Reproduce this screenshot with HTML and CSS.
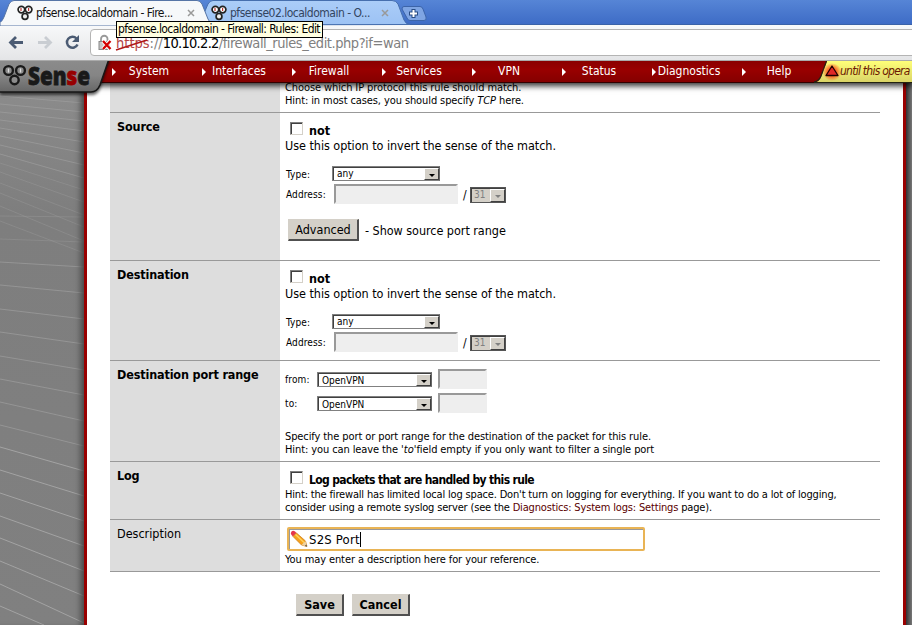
FILE: index.html
```html
<!DOCTYPE html>
<html lang="en">
<head>
<meta charset="utf-8">
<title>pfsense.localdomain - Firewall: Rules: Edit</title>
<link rel="stylesheet" href="styles.css">
</head>
<body>
<svg class="defs" width="0" height="0">
  <defs>
    <symbol id="pf" viewBox="0 0 16 16">
      <circle cx="4.4" cy="4.6" r="3.3" fill="#fff" stroke="#222" stroke-width="1.7"/>
      <circle cx="11.6" cy="4.6" r="3.3" fill="#fff" stroke="#222" stroke-width="1.7"/>
      <circle cx="8" cy="11.4" r="2.9" fill="#eee" stroke="#222" stroke-width="1.7"/>
      <path d="M4 3v3M11.6 3v3" stroke="#b33" stroke-width="1.2"/>
    </symbol>
  </defs>
</svg>
<div class="browser">
  <div class="tabstrip">
    <svg class="tabshapes" width="440" height="26" viewBox="0 0 440 26">
      <defs><linearGradient id="t2" x2="0" y2="1"><stop offset="0" stop-color="#abcdf8"/><stop offset="1" stop-color="#9cc2f4"/></linearGradient></defs>
      <path d="M199 25L208 4Q210 .5 213 .5H392Q396 .5 398 4L404 20Q406 24.500 410 24.500Z" fill="url(#t2)" stroke="#466fae"/>
      <path d="M0 26V22Q2 22 4 17L9 4Q11 .5 14 .5H197Q200 .5 202 4L208 19Q210 24.500 214 24.500L214 26Z" fill="#f6f8fa" stroke="#5675a6"/>
      <path d="M404 6.500H420Q422 6.500 423 9L426 17Q427 20.500 424 20.500H410Q408 20.500 407 18L402 9Q402 6.500 404 6.500Z" fill="#7fa5e3" stroke="#3c64a9"/>
      <path d="M413.500 9v9M409 13.500h9" stroke="#294d85" stroke-width="4"/>
      <path d="M413.500 10v7M410 13.500h7" stroke="#fff" stroke-width="2"/>
    </svg>
    <div class="tab tab1"><svg class="fav"><use href="#pf"/></svg><span class="tt">pfsense.localdomain - Fire...</span><svg class="x" viewBox="0 0 8 8"><path d="M1 1l6 6M7 1l-6 6"/></svg></div>
    <div class="tab tab2"><svg class="fav"><use href="#pf"/></svg><span class="tt">pfsense02.localdomain - O...</span><svg class="x" viewBox="0 0 8 8"><path d="M1 1l6 6M7 1l-6 6"/></svg></div>
  </div>
  <div class="toolbar">
    <svg class="navicons" width="90" height="34" viewBox="0 0 90 34">
      <path d="M23 17.500H11M16 12l-5.500 5.500L16 23" fill="none" stroke="#4b5b73" stroke-width="2.800"/>
      <path d="M38 17.500H50M45 12l5.500 5.500L45 23" fill="none" stroke="#c9cdd2" stroke-width="2.800"/>
      <path d="M76.500 13.500A5.500 5.500 0 1 0 77.500 19.500" fill="none" stroke="#4b5b73" stroke-width="2.500"/>
      <path d="M79 10v7h-7z" fill="#4b5b73"/>
    </svg>
    <div class="omni">
      <svg class="lock" width="16" height="18" viewBox="0 0 16 18">
        <path d="M4 8V5a3 3 0 0 1 6.500 0V8" fill="none" stroke="#999" stroke-width="1.800"/>
        <rect x="2" y="7.500" width="10" height="8" fill="#c5c5c5" stroke="#888"/>
        <path d="M6 7l7 8M13 7l-7 8" stroke="#fff" stroke-width="4"/>
        <path d="M6 7l7.500 8M13.500 7l-7.500 8" stroke="#d30000" stroke-width="2.300"/>
      </svg>
      <span class="url"><span class="https">https<svg class="strike" width="34" height="14" viewBox="0 0 34 14"><path d="M1 12L32 2" stroke="#b01818" stroke-width="1.600"/></svg></span>://<b>10.10.2.2</b><span class="path">/firewall_rules_edit.php?if=wan</span></span>
    </div>
  </div>
  <div class="tip">pfsense.localdomain - Firewall: Rules: Edit</div>
</div>
<div class="menu">
  <span class="m">System</span><span class="m">Interfaces</span><span class="m">Firewall</span><span class="m">Services</span><span class="m">VPN</span><span class="m">Status</span><span class="m">Diagnostics</span><span class="m">Help</span>
  <div class="alert">
    <svg class="alertbg" width="98" height="22" viewBox="0 0 98 22">
      <defs><linearGradient id="yl" x2="0" y2="1"><stop offset="0" stop-color="#ffff78"/><stop offset="1" stop-color="#d8d266"/></linearGradient>
      <radialGradient id="gl"><stop offset=".4" stop-color="#ff5a20"/><stop offset="1" stop-color="#ff5a20" stop-opacity="0"/></radialGradient></defs>
      <path d="M0 22Q5 21 7 16L13 0H98V22Z" fill="url(#yl)"/>
      <path d="M0 21Q5 20 7 15L12.500 0M0 21.500H98" fill="none" stroke="#221" stroke-width="1.200"/>
      <ellipse cx="18" cy="11" rx="9.500" ry="9" fill="url(#gl)"/>
      <path d="M18 5L24 14.500H12Z" fill="#e02828" stroke="#200" stroke-width="1.300" stroke-linejoin="round"/>
    </svg>
    <span class="alerttext">until this opera</span>
  </div>
  <div class="logo">
    <svg width="112" height="38" viewBox="0 0 112 38">
      <defs><linearGradient id="lg" x2="0" y2="1"><stop offset="0" stop-color="#8c8c8c"/><stop offset=".5" stop-color="#858585"/><stop offset="1" stop-color="#666"/></linearGradient>
      <filter id="sh" x="-10%" y="-10%" width="120%" height="150%"><feGaussianBlur stdDeviation="1.800"/></filter></defs>
      <path d="M0 0H110L100 28Q97 34 92 34H0Z" fill="#000" opacity=".6" filter="url(#sh)"/>
      <path d="M-2 -2H109L100 24Q97 31 91 31H-2Z" fill="url(#lg)" stroke="#171717" stroke-width="1.600"/>
      <g fill="#8c8c8c" stroke="#191919" stroke-width="2.400"><circle cx="14.500" cy="19" r="4.200"/><circle cx="8.500" cy="9.500" r="4.400"/><circle cx="20.500" cy="9.500" r="4.400"/></g>
      <path d="M8.500 7.500v4M20.500 7.500v4" stroke="#ddd" stroke-width="1.300"/>
      <text class="lt" x="28" y="23.500" textLength="62" lengthAdjust="spacingAndGlyphs">Sen<tspan class="lts">s</tspan>e</text>
    </svg>
  </div>
</div>
<div class="page">
  <div class="side left">
    <svg width="84" height="542" viewBox="0 0 84 542" fill="none" stroke="#a4a4a4">
      <g stroke-opacity=".55"><path d="M0 4L84 10M0 13L84 20M0 21L84 29M0 29L84 38M0 37L84 48M0 45L84 59M0 53L84 70M0 62L84 82M0 71L84 95"/></g>
      <g stroke-opacity=".3"><path d="M0 80L84 107M0 89L84 119M0 100L84 132M0 110L84 144M0 123L84 158M0 138L84 170M0 133L84 134M0 156L84 159"/></g>
      <g stroke-opacity=".6"><path d="M0 179L84 184M0 202L84 210M0 226L84 236M0 249L84 261M0 273L84 287M0 296L84 312M0 319L84 338M0 342L84 363"/></g>
      <g stroke-opacity=".95"><path d="M0 364L84 388M0 387L84 413M0 410L84 438M0 433L84 463M0 455L84 488M0 478L84 513M0 501L84 540M0 523L44 542"/></g>
    </svg>
  </div>
  <div class="sheet">
    <div class="row r0"><div class="k"></div><div class="v"><p class="s">Choose which IP protocol this rule should match.<br>Hint: in most cases, you should specify <i class="tcp">TCP</i> here.</p></div></div>
    <div class="row r1"><div class="k"><b>Source</b></div><div class="v">
      <div class="chk"><span class="box"></span><b>not</b></div>
      <p class="l">Use this option to invert the sense of the match.</p>
      <div class="type"><span class="lab">Type:</span><span class="sel any"><span>any</span><i class="dd"></i></span></div>
      <div class="addr"><span class="lab">Address:</span><span class="inp"></span><span class="sl">/</span><span class="sel bits"><span>31</span><i class="dd"></i></span></div>
      <div class="adv"><span class="btn">Advanced</span><span class="l">- Show source port range</span></div>
    </div></div>
    <div class="row r2"><div class="k"><b>Destination</b></div><div class="v">
      <div class="chk"><span class="box"></span><b>not</b></div>
      <p class="l">Use this option to invert the sense of the match.</p>
      <div class="type"><span class="lab">Type:</span><span class="sel any"><span>any</span><i class="dd"></i></span></div>
      <div class="addr"><span class="lab">Address:</span><span class="inp"></span><span class="sl">/</span><span class="sel bits"><span>31</span><i class="dd"></i></span></div>
    </div></div>
    <div class="row r3"><div class="k"><b>Destination port range</b></div><div class="v">
      <div class="port"><span class="lab">from:</span><span class="sel"><span>OpenVPN</span><i class="dd"></i></span><span class="inp"></span></div>
      <div class="port"><span class="lab">to:</span><span class="sel"><span>OpenVPN</span><i class="dd"></i></span><span class="inp"></span></div>
      <p class="s ph">Specify the port or port range for the destination of the packet for this rule.<br>Hint: you can leave the <i class="to">'to'</i> field empty if you only want to filter a single port</p>
    </div></div>
    <div class="row r4"><div class="k"><b>Log</b></div><div class="v">
      <div class="chk"><span class="box"></span><b>Log packets that are handled by this rule</b></div>
      <p class="s">Hint: the firewall has limited local log space. Don't turn on logging for everything. If you want to do a lot of logging,<br>consider using a remote syslog server (see the <a>Diagnostics: System logs: Settings</a> page).</p>
    </div></div>
    <div class="row r5"><div class="k">Description</div><div class="v">
      <div class="desc"><svg width="18" height="18" viewBox="0 0 18 18">
        <path d="M1.500 1.500Q3 0 5 1.500L6.500 3 3 6.500 1.500 5Q0 3 1.500 1.500Z" fill="#e5354b"/>
        <path d="M6.500 3L15.500 11 17 16.500 11.500 15 3 6.500Z" fill="#f6a11c" stroke="#c87912" stroke-width=".7"/>
        <path d="M5.500 4.500L14 12.500" stroke="#ffd45e" stroke-width="1.500"/>
        <path d="M15.500 11L17 16.500 11.500 15Z" fill="#eed2a2"/><path d="M16.200 14.500L17 16.500 15 16Z" fill="#333"/>
      </svg><span>S2S Port</span><i class="caret"></i></div>
      <p class="s">You may enter a description here for your reference.</p>
    </div></div>
    <div class="actions"><span class="btn">Save</span><span class="btn">Cancel</span></div>
  </div>
  <div class="side right"></div>
</div>
</body>
</html>
```

FILE: styles.css
```css
* { box-sizing: border-box; }
body { margin: 0; width: 912px; height: 625px; overflow: hidden; background: #fff; color: #000; font-family: "DejaVu Sans Condensed", "DejaVu Sans", sans-serif; font-stretch: condensed; font-size: 12.5px; white-space: nowrap; }
p { margin: 0; }
.defs { position: absolute; }
.browser { position: relative; z-index: 3; height: 61px; }
.tabstrip { position: relative; height: 25px; display: flex; background: linear-gradient(#5685d6, #3e6cc6); border-bottom: 1px solid #3a62a8; }
.tabshapes { position: absolute; left: 0; top: 0; }
.tab { position: relative; display: flex; align-items: center; height: 25px; font-size: 12px; letter-spacing: -0.5px; }
.tab1 { width: 203px; padding-left: 17px; color: #111; }
.tab2 { width: 200px; padding-left: 8px; color: #33455f; }
.fav { width: 16px; height: 16px; flex: none; }
.tt { width: 143px; margin: 0 8px 0 3px; }
.x { width: 8px; height: 8px; stroke: #999; stroke-width: 1.5; }
.toolbar { height: 36px; display: flex; background: linear-gradient(#f8f9fa, #e4e5e7); border-bottom: 1px solid #aaa; }
.omni { display: flex; align-items: center; flex: 1; height: 27px; margin: 4px -4px 0 0; border: 1px solid #b4b4b4; border-radius: 4px; background: #fff; padding-left: 6px; }
.url { margin-left: 3px; font-size: 14.5px; color: #808080; }
.url b { font-weight: normal; color: #000; letter-spacing: -0.7px; }
.path { letter-spacing: -0.45px; }
.https { position: relative; color: #b64545; }
.strike { position: absolute; left: -1px; top: 3px; }
.tip { position: absolute; left: 116px; top: 21px; width: 207px; height: 17px; border: 1px solid #000; background: #ffffe1; font-size: 12px; line-height: 15px; padding-left: 1px; letter-spacing: -0.57px; }
.menu { position: relative; z-index: 2; display: flex; height: 22px; padding-left: 104px; background: linear-gradient(#8a0000, #990000 40%, #850000); border-bottom: 1px solid #300; box-shadow: 0 2px 6px 1px rgba(0,0,0,.8); color: #fff; font-size: 12px; line-height: 21px; }
.m { position: relative; width: 90px; text-align: center; }
.m::before { content: ""; position: absolute; left: 8px; top: 7px; border: solid transparent; border-width: 4px 0 4px 4px; border-left-color: #fff; }
.alert { position: absolute; right: 0; top: 0; width: 98px; height: 22px; color: #6a1800; }
.alertbg, .alerttext { position: absolute; left: 0; top: 0; }
.alerttext { left: 26px; width: 72px; overflow: hidden; font-style: italic; line-height: 20px; letter-spacing: -0.75px; }
.logo { position: absolute; left: 0; top: 0; height: 38px; }
.logo svg { display: block; }
.lt { font: 800 25px "Open Sans", "DejaVu Sans", sans-serif; fill: #191919; stroke: #191919; stroke-width: .8px; }
.lts { fill: #970000; stroke: #970000; }
.page { display: flex; height: 542px; }
.left { width: 84px; position: relative; background: linear-gradient(#8c8c8c, #7e7e7e 130px, #808080); }
.left::after { content: ""; position: absolute; inset: 0; box-shadow: inset -7px 0 6px -4px #444; }
.left svg { display: block; }
.right { flex: 1; background: linear-gradient(90deg, #333, #777); }
.sheet { width: 822px; border: solid #900; border-width: 0 3px; padding: 0 23px; background: #fff; overflow: hidden; }
.row { display: flex; width: 770px; border-bottom: 1px solid #999; }
.k { width: 170px; background: #ddd; padding: 6px 0 0 7px; line-height: 16px; }
.k b { letter-spacing: -0.15px; }
.v { flex: 1; padding-left: 5px; }
.r0 { height: 30px; } .r1 { height: 148px; } .r2 { height: 100px; } .r3 { height: 101px; } .r4 { height: 58px; } .r5 { height: 52px; }
.s { font-size: 11px; line-height: 13px; letter-spacing: -0.1px; }
.r0 .s { margin-top: -2px; }
.l { line-height: 15px; letter-spacing: -0.04px; }
.chk { display: flex; height: 25px; padding: 9px 0 0 5px; }
.chk b { margin-left: 6px; line-height: 18px; }
.box { width: 13px; height: 13px; border: 1px solid; border-color: #808080 #d4d0c8 #d4d0c8 #808080; box-shadow: inset 1px 1px #404040; background: #fff; }
.lab { font-size: 10px; line-height: 14px; letter-spacing: .12px; }
.type { display: flex; margin-top: 13px; height: 18px; padding-left: 1px; }
.type .lab { width: 46px; padding-top: 2px; }
.addr { display: flex; height: 20px; padding-left: 1px; }
.addr .lab { width: 48px; padding-top: 4px; }
.addr .inp { width: 124px; height: 20px; }
.sl { width: 12px; padding: 4px 0 0 5px; line-height: 14px; font-size: 12px; }
.inp { background: #eee; border: 2px solid; border-color: #999 #eee #eee #999; }
.sel { display: flex; justify-content: space-between; height: 15px; border: 1px solid; border-color: #808080 #666 #808080 #808080; box-shadow: inset 1px 1px #404040; background: #fff; font-size: 10px; line-height: 14px; padding-left: 4px; }
.any { width: 108px; }
.bits { width: 36px; height: 16px; margin-top: 3px; background: #d4d0c8; color: #808080; border-color: #555; padding-left: 3px; }
.dd { position: relative; width: 15px; margin: 1px 0 0; background: #d4d0c8; border: 1px solid; border-color: #fff #404040 #404040 #fff; }
.dd::after { content: ""; position: absolute; left: 4px; top: 5px; border: solid transparent; border-width: 3px 3px 0; border-top-color: #000; }
.bits .dd::after { border-top-color: #808080; }
.adv { display: flex; align-items: center; gap: 6px; margin: 15px 0 0 3px; }
.btn { display: inline-block; height: 22px; line-height: 20px; background: #d4d0c8; border: solid; border-width: 1px 2px 2px 1px; border-color: #d4d0c8 #505050 #505050 #d4d0c8; text-align: center; }
.adv .btn { width: 71px; }
.port { display: flex; height: 24px; }
.port:first-child { margin-top: 8px; }
.port .lab { width: 32px; padding-top: 4px; }
.port .sel { width: 115px; margin: 3px 6px 0 0; line-height: 15px; }
.port .inp { width: 49px; height: 20px; }
.ph { margin-top: 13px; }
.to { letter-spacing: 0; margin-right: -3px; }
.r4 .chk { height: 26px; padding-top: 9px; }
.r4 .chk b { font-size: 12px; letter-spacing: -0.65px; }
.r4 .s { letter-spacing: -0.17px; }
.r4 a { color: #5a0000; }
.desc { display: flex; align-items: center; width: 358px; height: 24px; margin: 7px 0 2px 2px; border: 2px solid #e9b455; border-radius: 2px; box-shadow: inset 1px 1px #999; padding-left: 1px; }
.desc span { margin-left: 1px; font-size: 13px; letter-spacing: .2px; }
.caret { width: 1px; height: 15px; background: #000; }
.actions { display: flex; gap: 8px; margin: 22px 0 0 186px; font-weight: bold; }
.actions .btn { width: 48px; height: 22px; }
.actions .btn + .btn { width: 58px; }
```
